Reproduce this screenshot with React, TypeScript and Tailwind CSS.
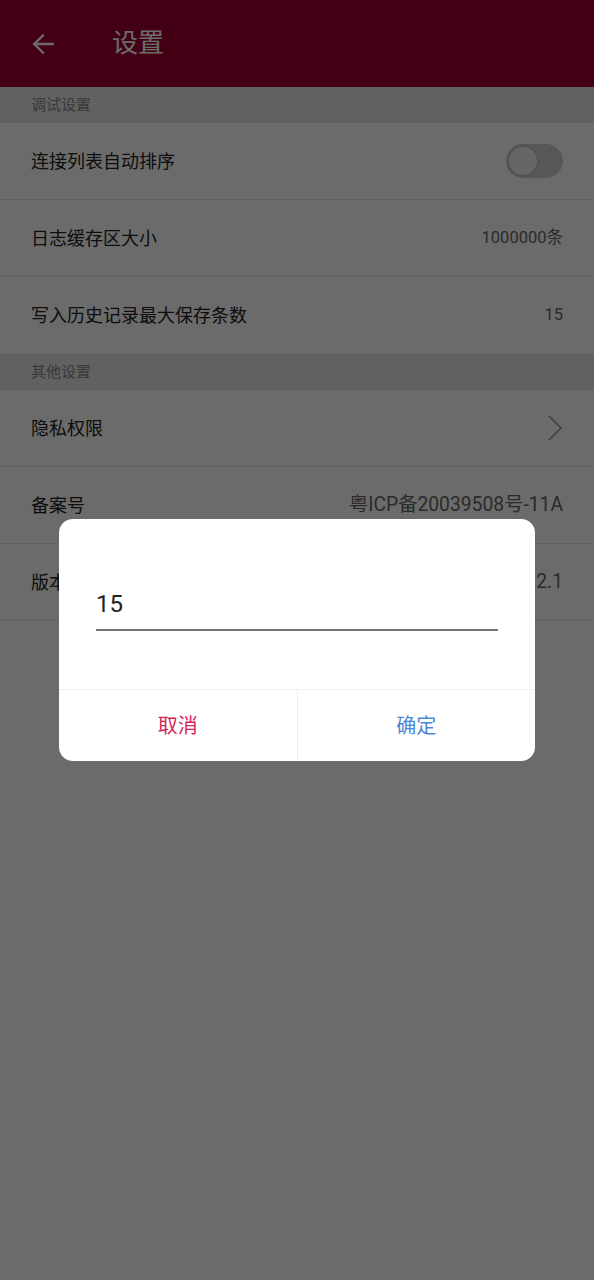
import React from 'react';

const font = { fontFamily: '"Roboto", "Noto Sans CJK SC", sans-serif' };

const Section: React.FC<{ title: string }> = ({ title }) => (
  <div className="h-[36px] bg-[#e6e6e6] pl-[31px] flex items-center text-[15px] text-[#8a8a8a]">{title}</div>
);

const Row: React.FC<{ label: string; last?: boolean; children?: React.ReactNode }> = ({ label, last, children }) => (
  <div className={`h-[77px] bg-white flex items-center justify-between pl-[31px] pr-[31px] ${last ? '' : 'border-b border-[#e8e8e8]'}`}>
    <span className="text-[18px] text-[#222]">{label}</span>
    {children}
  </div>
);

const App: React.FC = () => {
  return (
    <div className="relative w-[594px] h-[1280px] bg-white overflow-hidden" style={font}>
      <div className="h-[87px] bg-[#a10031] flex items-center">
        <svg className="ml-[30px] w-[26px] h-[26px]" viewBox="0 0 24 24" fill="none" stroke="#fff" strokeWidth="2.2" strokeLinecap="square">
          <path d="M21 12H4M12 4l-8 8 8 8" />
        </svg>
        <span className="ml-[56px] text-[26px] text-white">设置</span>
      </div>

      <Section title="调试设置" />
      <Row label="连接列表自动排序">
        <div className="w-[57px] h-[34px] rounded-full bg-[#d0d0d0] flex items-center pl-[1px]">
          <div className="w-[32px] h-[32px] rounded-full bg-[#f4f4f4] border-[2px] border-[#c4c4c4]" />
        </div>
      </Row>
      <Row label="日志缓存区大小">
        <span className="text-[16.5px] text-[#666]">1000000条</span>
      </Row>
      <Row label="写入历史记录最大保存条数" last>
        <span className="text-[16.5px] text-[#666]">15</span>
      </Row>

      <Section title="其他设置" />
      <Row label="隐私权限">
        <svg className="w-[16px] h-[28px]" viewBox="0 0 16 28" fill="none" stroke="#999" strokeWidth="1.6">
          <path d="M2 2l12 12L2 26" />
        </svg>
      </Row>
      <Row label="备案号">
        <span className="text-[19.3px] text-[#666]">粤ICP备20039508号-11A</span>
      </Row>
      <Row label="版本号">
        <span className="text-[19.3px] text-[#666]">1.2.1</span>
      </Row>

      <div className="absolute inset-0 bg-black/[0.58]">
        <div className="ml-[59px] mt-[519px] w-[476px] h-[242px] bg-white rounded-[14px] overflow-hidden flex flex-col">
          <div className="h-[170px] px-[37px] pt-[69px]">
            <div className="text-[24px] leading-[32px] text-[#222] pb-[9px] border-b-[2px] border-[#777]">15</div>
          </div>
          <div className="flex-1 flex border-t border-[#efefef]">
            <button className="flex-1 flex items-center justify-center text-[20px] text-[#d6245a] border-r border-[#efefef]">取消</button>
            <button className="flex-1 flex items-center justify-center text-[20px] text-[#4a87d6]">确定</button>
          </div>
        </div>
      </div>
    </div>
  );
};

export default App;
